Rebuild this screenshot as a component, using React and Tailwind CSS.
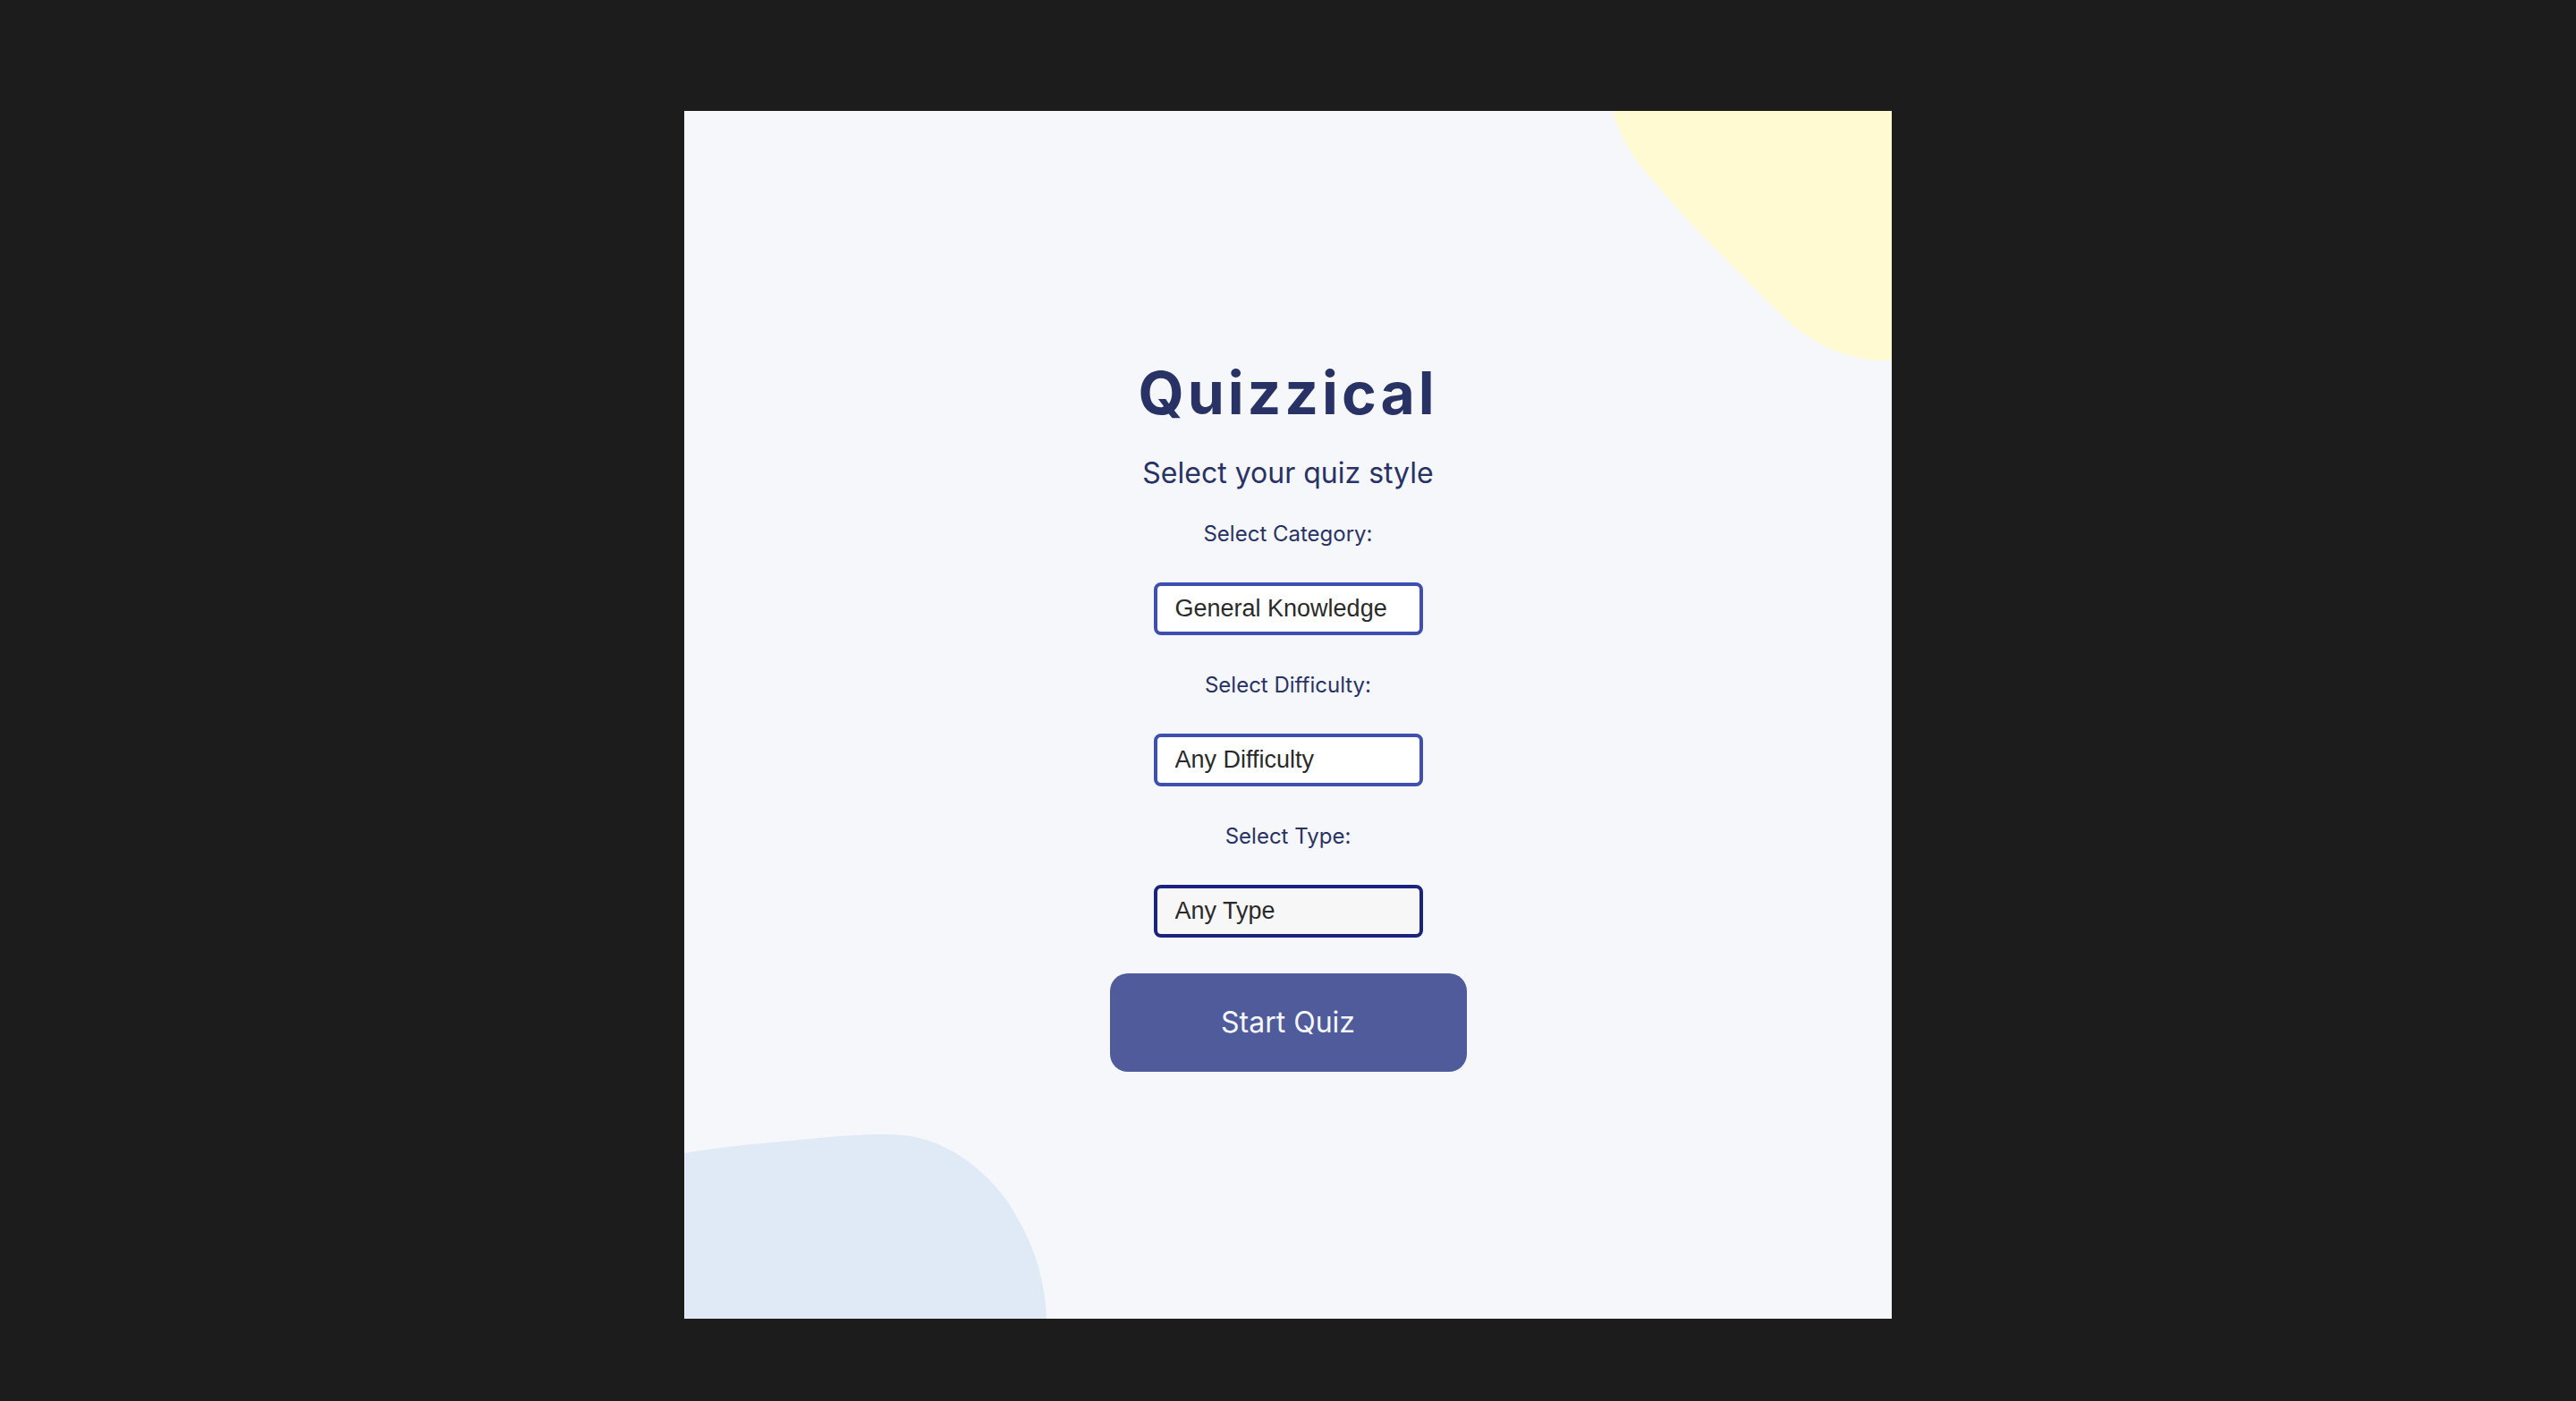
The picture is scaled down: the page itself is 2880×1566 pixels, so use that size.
import { useState } from 'react';

const CATEGORIES = ['General Knowledge', 'Books', 'Film', 'Music', 'Science & Nature'];
const DIFFICULTIES = ['Any Difficulty', 'Easy', 'Medium', 'Hard'];
const TYPES = ['Any Type', 'Multiple Choice', 'True / False'];

function Field({ label, value, options, onChange, active, first }) {
  return (
    <>
      <label className={`text-[24px] leading-none text-[#293264] ${first ? '' : 'mt-[2px]'}`}>{label}</label>
      <select
        value={value}
        onChange={e => onChange(e.target.value)}
        className={`appearance-none w-[301px] h-[59px] rounded-[8px] border-[4px] pl-[20px] text-[27px] text-[#2a2a2a] outline-none ${active ? 'border-[#1a237e] bg-[#f7f7f7]' : 'border-[#3f4fb0] bg-white'}`}
        style={{ fontFamily: '"Liberation Sans", Arial, sans-serif' }}
      >
        {options.map(o => <option key={o}>{o}</option>)}
      </select>
    </>
  );
}

export default function App() {
  const [category, setCategory] = useState(CATEGORIES[0]);
  const [difficulty, setDifficulty] = useState(DIFFICULTIES[0]);
  const [type, setType] = useState(TYPES[0]);

  return (
    <div className="min-h-screen bg-[#1c1c1c] flex justify-center pt-[124px]" style={{ fontFamily: 'Inter, "Noto Sans", sans-serif' }}>
      <div className="relative w-[1350px] h-[1350px] bg-[#f5f7fb] overflow-hidden">
        {/* decorative blobs */}
        <svg className="absolute inset-0" width="1350" height="1350" viewBox="0 0 1350 1350">
          <path
            d="M1038 0 C1046 28 1062 56 1082 76 C1105 104 1135 136 1155 156 C1180 181 1210 212 1232 233 C1255 254 1280 268 1308 275 C1322 278 1336 279 1350 279 L1350 0 Z"
            fill="#fffad1"
          />
          <path
            d="M0 1165 C40 1158 75 1155 120 1151 C160 1147 190 1144 225 1144 C255 1144 275 1150 292 1159 C320 1172 345 1196 362 1220 C380 1248 392 1275 398 1300 C403 1320 405 1340 405 1350 L0 1350 Z"
            fill="#dfeaf6"
          />
        </svg>

        <div className="relative flex flex-col items-center gap-[42px] pt-[282px]">
          <h1 className="text-[66px] leading-none font-bold tracking-[0.06em] text-[#293264]">Quizzical</h1>
          <p className="text-[32px] leading-[29px] text-[#293264]">Select your quiz style</p>
          <Field first label="Select Category:" value={category} options={CATEGORIES} onChange={setCategory} />
          <Field label="Select Difficulty:" value={difficulty} options={DIFFICULTIES} onChange={setDifficulty} />
          <Field label="Select Type:" value={type} options={TYPES} onChange={setType} active />
          <button className="-mt-[2px] w-[399px] h-[110px] rounded-[20px] bg-[#4f5b9b] text-[32px] text-[#f5f7fb] leading-none">
            Start Quiz
          </button>
        </div>
      </div>
    </div>
  );
}
